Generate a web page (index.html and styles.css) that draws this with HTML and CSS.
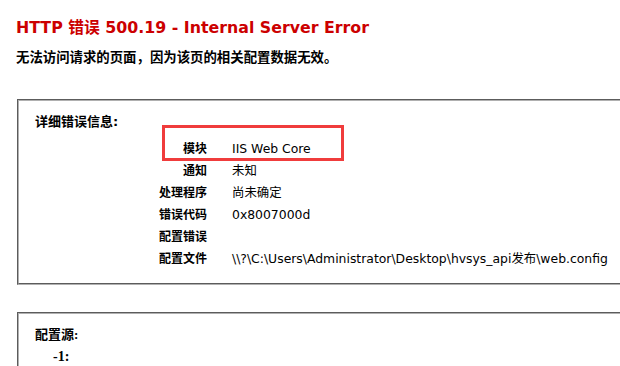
FILE: index.html
```html
<!DOCTYPE html>
<html lang="zh-CN">
<head>
    <meta charset="UTF-8">
    <title>IIS 10.0 详细错误 - 500.19 - Internal Server Error</title>
    <link rel="stylesheet" href="styles.css">
</head>
<body>
    <div class="content">
        <h2 class="error-title">HTTP 错误 500.19 - Internal Server Error</h2>
        <p class="summary">无法访问请求的页面，因为该页的相关配置数据无效。</p>

        <div class="box">
            <div class="legend">详细错误信息:</div>
            <div class="details">
                <div class="label">模块</div><div class="value">IIS Web Core</div>
                <div class="label">通知</div><div class="value">未知</div>
                <div class="label">处理程序</div><div class="value">尚未确定</div>
                <div class="label">错误代码</div><div class="value">0x8007000d</div>
                <div class="label">配置错误</div><div class="value"></div>
                <div class="label">配置文件</div><div class="value">\\?\C:\Users\Administrator\Desktop\hvsys_api发布\web.config</div>
            </div>
        </div>

        <div class="box config-source">
            <div class="legend">配置源:</div>
            <div class="line-no">-1:</div>
        </div>
    </div>

    <!-- red marker drawn over the screenshot -->
    <div class="marker"></div>
</body>
</html>
```

FILE: styles.css
```css
html, body {
    margin: 0;
    padding: 0;
    overflow: hidden;
}
body {
    font-family: "DejaVu Sans", "Noto Sans CJK SC", sans-serif;
    font-size: 12px;
    color: #000000;
    background: #ffffff;
    position: relative;
    width: 620px;
    height: 366px;
}
.content {
    padding: 18px 0 0 16px;
}
.error-title {
    margin: 0;
    font-size: 15.8px;
    line-height: 20px;
    font-weight: bold;
    color: #cc0000;
}
.summary {
    margin: 10px 0 0 0;
    font-size: 13.4px;
    line-height: 20px;
    font-weight: bold;
}
.box {
    margin: 31px 0 0 1px;
    width: 640px;
    border: 2px groove #b0b0b0;
    padding: 12px 0 13px 16px;
}
.legend {
    font-size: 13px;
    line-height: 18px;
    font-weight: bold;
}
.details {
    display: grid;
    grid-template-columns: 172px auto;
    column-gap: 25px;
    margin-top: 7px;
}
.label, .value {
    line-height: 22px;
    height: 22px;
    white-space: nowrap;
}
.label {
    text-align: right;
    font-weight: bold;
}
.value {
    font-size: 12.4px;
}
.config-source {
    margin-top: 27px;
    padding-top: 12px;
    height: 60px;
    font-family: "Liberation Serif", "Noto Sans CJK SC", serif;
}
.line-no {
    margin: 4px 0 0 18px;
    font-size: 14px;
    line-height: 18px;
    font-weight: bold;
}
.marker {
    position: absolute;
    left: 162px;
    top: 125px;
    width: 176px;
    height: 30px;
    border: 3px solid #f03c3c;
}
```
